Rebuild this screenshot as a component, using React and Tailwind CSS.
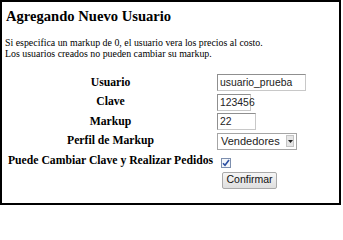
import React from "react";

const serif = { fontFamily: '"Liberation Serif", "Times New Roman", serif' };
const sans = { fontFamily: '"Liberation Sans", Arial, sans-serif' };

function Label({ children }) {
  return (
    <div className="w-[213px] flex items-center justify-center font-bold text-[11.7px] leading-[14px] text-black whitespace-nowrap" style={serif}>
      {children}
    </div>
  );
}

function TextBox({ w, children }) {
  return (
    <div
      className={`${w} h-[17px] flex items-center bg-white border border-t-[#8f8f8f] border-l-[#8f8f8f] border-r-[#c8c8c8] border-b-[#c8c8c8] pl-[2px] text-[10.4px] text-[#222] whitespace-nowrap`}
      style={sans}
    >
      {children}
    </div>
  );
}

export default function App() {
  return (
    <div className="w-[343px] h-[206px] bg-white">
      <div className="w-[341px] h-[205px] border-2 border-black bg-white text-black" style={serif}>
        <div className="pl-[4px] pt-[5.5px] text-[14.6px] leading-[17px] font-bold" style={serif}>
          Agregando Nuevo Usuario
        </div>
        <div className="pl-[3px] mt-[12px] text-[9.9px] leading-[11.3px]" style={serif}>
          <div>Si especifica un markup de 0, el usuario vera los precios al costo.</div>
          <div>Los usuarios creados no pueden cambiar su markup.</div>
        </div>
        <div className="mt-[14px] pl-[2px] flex flex-col">
          <div className="h-[19.5px] flex items-center">
            <Label>Usuario</Label>
            <TextBox w="w-[89px]">usuario_prueba</TextBox>
          </div>
          <div className="h-[19.5px] flex items-center">
            <Label>Clave</Label>
            <TextBox w="w-[34px]">
              <span>123456</span>
              <span className="inline-block w-px h-[12px] bg-black ml-px" />
            </TextBox>
          </div>
          <div className="h-[19.5px] flex items-center">
            <Label>Markup</Label>
            <TextBox w="w-[39px]">22</TextBox>
          </div>
          <div className="h-[19.5px] flex items-center">
            <Label>Perfil de Markup</Label>
            <div
              className="w-[80px] h-[17px] flex items-center justify-between bg-white border border-[#a5a5a5] pl-[3px] pr-[2px] text-[11px] text-[#222]"
              style={sans}
            >
              <span>Vendedores</span>
              <span className="w-[8px] h-[12px] flex items-center justify-center bg-[#e6e6e6] border border-[#c4c4c4]">
                <svg width="5" height="3" viewBox="0 0 5 3">
                  <path d="M0 0 L5 0 L2.5 3 Z" fill="#222" />
                </svg>
              </span>
            </div>
          </div>
          <div className="h-[20px] flex items-center">
            <Label>Puede Cambiar Clave y Realizar Pedidos</Label>
            <div className="ml-[4px] mt-[4px] w-[10px] h-[10px] border border-[#7d8fae] bg-[#f4f7fb] flex items-center justify-center">
              <svg width="8" height="8" viewBox="0 0 8 8">
                <path d="M1 4.2 L3 6.3 L7 1" fill="none" stroke="#2b4fa3" strokeWidth="1.6" />
              </svg>
            </div>
          </div>
          <div className="h-[18px] flex items-center">
            <div className="w-[213px]" />
            <div
              className="ml-[5px] w-[55px] h-[17px] flex items-center justify-center rounded-[2px] border border-[#a9a9a9] bg-gradient-to-b from-[#f6f6f6] to-[#dedede] text-[10.5px] text-[#111]"
              style={sans}
            >
              Confirmar
            </div>
          </div>
        </div>
      </div>
    </div>
  );
}
